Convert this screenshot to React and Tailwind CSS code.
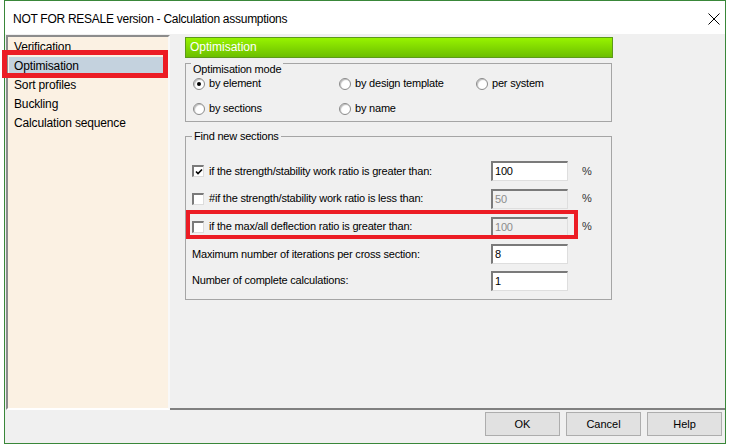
import React from "react";

const navItems = ["Verification", "Optimisation", "Sort profiles", "Buckling", "Calculation sequence"];

function Radio({ checked, label }) {
  return (
    <div className="flex items-center gap-[4px]">
      <span className="w-[12px] h-[12px] rounded-full border border-[#8a8a8a] bg-white flex items-center justify-center shadow-[inset_1px_1px_1px_#bdbdbd]">
        {checked && <span className="w-[4px] h-[4px] rounded-full bg-black" />}
      </span>
      <span>{label}</span>
    </div>
  );
}

function Checkbox({ checked }) {
  return (
    <span className="w-[12px] h-[12px] bg-white border-t-2 border-l-2 border-b border-r border-t-[#7a7a7a] border-l-[#7a7a7a] border-b-[#dcdcdc] border-r-[#dcdcdc] flex items-center justify-center">
      {checked && (
        <svg width="8" height="8" viewBox="0 0 8 8">
          <path d="M1 3.5 L3 5.5 L7 1.5" stroke="#000" strokeWidth="1.6" fill="none" />
        </svg>
      )}
    </span>
  );
}

function Field({ value, disabled }) {
  return (
    <div
      className={
        "w-[77px] h-[20px] pl-[2px] flex items-center border-t-2 border-l-2 border-b border-r border-t-[#7a7a7a] border-l-[#7a7a7a] border-b-[#dedede] border-r-[#dedede] " +
        (disabled ? "bg-[#f0f0f0] text-[#8c8c8c]" : "bg-white text-black")
      }
    >
      {value}
    </div>
  );
}

function Row({ h, check, checked, label, value, disabled }) {
  return (
    <div className={"flex items-center pl-[6px] " + h}>
      <div className="w-[299px] flex items-center gap-[5px]">
        {check && <Checkbox checked={checked} />}
        <span>{label}</span>
      </div>
      <Field value={value} disabled={disabled} />
      {check && <span className="ml-[14px] text-[#333]">%</span>}
    </div>
  );
}

export default function App() {
  return (
    <div className="relative w-[731px] h-[448px] bg-white font-['Liberation_Sans',Arial,sans-serif] text-black">
      <div className="ml-[4px] w-[722px] h-[444px] border border-[#398739] flex flex-col">
        {/* title */}
        <div className="h-[33px] bg-white flex items-center justify-between pl-[8px] pr-[4px] pt-[2px] text-[12px]">
          <span className="tracking-[-0.27px]">NOT FOR RESALE version - Calculation assumptions</span>
          <svg width="12" height="12" viewBox="0 0 12 12" className="mr-[1px]">
            <path d="M0.5 0.5 L11.5 11.5 M11.5 0.5 L0.5 11.5" stroke="#000" strokeWidth="1" />
          </svg>
        </div>

        {/* body */}
        <div className="h-[376px] flex bg-[#f0f0f0]">
          <div className="ml-[1px] mt-[1px] w-[164px] h-[375px] border-2 border-t-[#8c8c8c] border-l-[#8c8c8c] border-b-white border-r-[#f8f8f8] bg-[#fbf1e3] text-[12px] tracking-[-0.15px] pt-[0.5px]">
            {navItems.map((item, i) => (
              <div
                key={item}
                className={"mx-[1px] pl-[5px] h-[19px] leading-[19px] " + (i === 1 ? "bg-[#c4d2de]" : "")}
              >
                {item}
              </div>
            ))}
          </div>

          <div className="flex-1 border-b-2 border-[#808080] pl-[15px] pt-[3px] text-[11px] tracking-[-0.2px]">
            <div className="w-[428px] h-[21px] bg-linear-to-b from-[#97f300] to-[#6cbf00] border border-[#5c9a1a] text-white text-[12px] tracking-normal pl-[4px] leading-[19px]">
              Optimisation
            </div>

            <div className="relative mt-[5px] w-[427px] h-[59px] border border-[#a5a5a5] pl-[7px] pt-[7px]">
              <span className="absolute left-[5px] top-[-1px] px-[2px] leading-[13px] bg-[#f0f0f0]">Optimisation mode</span>
              <div className="grid grid-cols-[146px_137px_1fr] auto-rows-[25px] items-center">
                <Radio checked label="by element" />
                <Radio label="by design template" />
                <Radio label="per system" />
                <Radio label="by sections" />
                <Radio label="by name" />
              </div>
            </div>

            <div className="relative mt-[14px] w-[427px] h-[164px] border border-[#a5a5a5] pt-[20.5px]">
              <span className="absolute left-[6px] top-[-7.5px] px-[2px] leading-[13px] bg-[#f0f0f0]">Find new sections</span>
              <Row h="h-[27px]" check checked label="if the strength/stability work ratio is greater than:" value="100" />
              <Row h="h-[28px]" check label="#if the strength/stability work ratio is less than:" value="50" disabled />
              <Row h="h-[28px]" check label="if the max/all deflection ratio is greater than:" value="100" disabled />
              <Row h="h-[27px]" label="Maximum number of iterations per cross section:" value="8" />
              <Row h="h-[26px]" label="Number of complete calculations:" value="1" />
            </div>
          </div>
        </div>

        {/* footer */}
        <div className="h-[33px] bg-[#f0f0f0] flex justify-end items-start pt-[2px] pr-[3px] gap-[6px] text-[11px]">
          {["OK", "Cancel", "Help"].map(b => (
            <button key={b} type="button" className="w-[75px] h-[24px] bg-[#e1e1e1] border border-[#adadad]">
              {b}
            </button>
          ))}
        </div>
      </div>

      {/* annotation boxes */}
      <div className="absolute left-[2px] top-[50px] w-[166px] h-[28px] border-[5px] border-[#ec1c24]" />
      <div className="absolute left-[186px] top-[210px] w-[392px] h-[29px] border-4 border-[#ec1c24]" />
    </div>
  );
}
